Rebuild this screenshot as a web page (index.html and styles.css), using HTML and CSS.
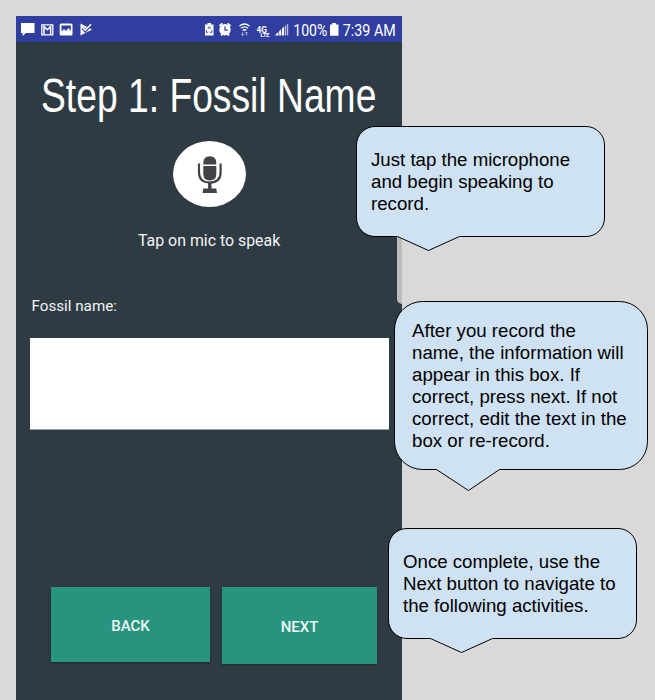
FILE: index.html
```
<!DOCTYPE html>
<html lang="en">
<head>
<meta charset="utf-8">
<title>Step 1: Fossil Name</title>
<link rel="stylesheet" href="styles.css">
</head>
<body>
<main class="phone">
  <header class="status">
    <svg class="notices" width="80" height="26" viewBox="16 16 80 26" fill="#fff">
      <path d="M21 23h13.500v10h-8.500l-3.500 3v-3h-1.500z"/>
      <path d="M41.800 24.800h11v10h-11z" fill="none" stroke="#fff" stroke-width="1.300"/>
      <path d="M44 34.500v-8l3.300 3.300 3.300-3.300v8" fill="none" stroke="#fff" stroke-width="1.500"/>
      <path fill-rule="evenodd" d="M61 23.500h10q1.500 0 1.500 1.500v9q0 1.500-1.500 1.500h-10q-1.300 0-1.300-1.500v-9q0-1.500 1.300-1.500zM61.500 25.500v6l2.500-2.500 2 2 2.500-3 2.300 3v-5.500z"/>
      <path d="M80.500 23.500l11.500 6-11.500 6z"/>
      <path d="M82.500 28l2.800 2.800 5.700-6" fill="none" stroke="#303f9f" stroke-width="3"/>
      <path d="M82.500 27.500l2.800 2.800 5.700-6" fill="none" stroke="#fff" stroke-width="1.500"/>
    </svg>
    <svg class="signals" width="88" height="26" viewBox="203 16 88 26" fill="#fff">
      <path d="M207.500 23h3.500v1.500h2.500v11h-8.500v-11h2.500z"/>
      <path d="M207.700 29l1.500-2.300 1.500 2.300M211.800 30.200l.2 2.100h-2M206.500 30.200l-.2 2.100h2" fill="none" stroke="#303f9f" stroke-width=".9"/>
      <circle cx="225" cy="29.700" r="5.700"/>
      <path d="M219.500 26l3-2.600M230.500 26l-3-2.600M221 35.500l1.600-1.600M229 35.500l-1.600-1.600" stroke="#fff" stroke-width="1.800"/>
      <path d="M225 26.300v3.900h2.800" fill="none" stroke="#303f9f" stroke-width="1.200"/>
      <g fill="none" stroke="#fff" stroke-width="1.300">
        <path d="M239.500 26q5-4 10 0M241 28.300q3.500-2.800 7 0M242.700 30.500q1.800-1.500 3.600 0"/>
        <path d="M242.500 32v3.500M246.500 32v3.500M241 34l1.500 1.500 1.500-1.500M245 33.500l1.500-1.500 1.500 1.500" stroke-width=".8" opacity=".65"/>
      </g>
      <text class="net" x="256.500" y="32.500" textLength="10.500" lengthAdjust="spacingAndGlyphs">4G</text>
      <text class="lte" x="260.500" y="36.800" textLength="9" lengthAdjust="spacingAndGlyphs">LTE</text>
      <path d="M275.500 35.500v-1l3-2.500v3.500zM279.200 35.500v-4.500l2-1.700v6.200zM282 35.500v-7l2-1.700v8.700z"/>
      <path d="M284.700 35.500v-9.300l1.600-1.400v10.700zM287 35.500v-11.300l1.200-1v12.300z" opacity=".65"/>
    </svg>
    <svg class="clock" width="111" height="26" viewBox="291 16 111 26" fill="#fff">
      <text class="time" x="293.300" y="35.500" textLength="34" lengthAdjust="spacingAndGlyphs">100%</text>
      <path d="M332.200 23h3.600v1.500h2.700v11.300h-8.500v-11.300h2.200z"/>
      <text class="time" x="342.800" y="35.500" textLength="53" lengthAdjust="spacingAndGlyphs">7:39 AM</text>
    </svg>
  </header>

  <h1 class="title"><span>Step 1: Fossil Name</span></h1>

  <button class="mic" aria-label="Record">
    <svg width="28" height="40" viewBox="0 0 28 40">
      <path d="M7.300 10.500v-1.500q0-6.700 6.500-6.700t6.500 6.700v1.500zM7.300 12h13v8q0 6.500-6.500 6.500t-6.500-6.500z" fill="#424346"/>
      <path d="M3 9.500v9q0 10 10.800 10t10.800-10v-9" fill="none" stroke="#424346" stroke-width="2.200"/>
      <path d="M12.100 28h3.400v6.500h4.700l.8 4.500h-14.500l.8-4.500h4.800z" fill="#424346"/>
    </svg>
  </button>
  <p class="hint">Tap on mic to speak</p>

  <label class="label" for="fossil">Fossil name:</label>
  <input class="field" id="fossil" type="text">

  <div class="actions">
    <button class="btn back">BACK</button>
    <button class="btn next">NEXT</button>
  </div>
  <div class="scrollbar"></div>
</main>

<aside class="callout tap">
  <svg class="bubble" width="250" height="126" viewBox="356 126 250 126">
    <path d="M375 126.500H586a18.500 18.500 0 0 1 18.500 18.500V218a18.500 18.500 0 0 1-18.500 18.500H459.500L428.500 250.500L397.500 236.500H375a18.500 18.500 0 0 1-18.500-18.500V145a18.500 18.500 0 0 1 18.500-18.500Z"/>
  </svg>
  <p>Just tap the microphone<br>and begin speaking to<br>record.</p>
</aside>
<aside class="callout edit">
  <svg class="bubble" width="255" height="191" viewBox="394 301 255 191">
    <path d="M422.500 301.500H619.500a28 28 0 0 1 28 28V441.500a28 28 0 0 1-28 28H499.500L468.500 490.500L436.500 469.500H422.500a28 28 0 0 1-28-28V329.500a28 28 0 0 1 28-28Z"/>
  </svg>
  <p>After you record the<br>name, the information will<br>appear in this box. If<br>correct, press next. If not<br>correct, edit the text in the<br>box or re-record.</p>
</aside>
<aside class="callout proceed">
  <svg class="bubble" width="250" height="126" viewBox="388 528 250 126">
    <path d="M407 528.500H618a18.500 18.500 0 0 1 18.500 18.500V620a18.500 18.500 0 0 1-18.500 18.500H492.500L461.500 652.500L430.500 638.500H407a18.500 18.500 0 0 1-18.500-18.500V547a18.500 18.500 0 0 1 18.500-18.500Z"/>
  </svg>
  <p>Once complete, use the<br>Next button to navigate to<br>the following activities.</p>
</aside>
</body>
</html>
```
FILE: styles.css
```
* { box-sizing: border-box; }
body {
  margin: 0;
  height: 700px;
  padding: 16px 0 0 16px;
  background: #d9d9d9;
  position: relative;
  overflow: hidden;
}
.phone {
  position: relative;
  display: flex;
  flex-direction: column;
  width: 386px;
  height: 684px;
  background: #2f3b43;
  color: #f2f3f4;
  font-family: Roboto, sans-serif;
}
.status {
  display: flex;
  height: 26px;
  flex: none;
  background: #303f9f;
}
.status svg { display: block; flex: none; overflow: visible; }
.signals { margin-left: auto; }
.time { font: 16px Roboto, sans-serif; }
.net { font: bold 9px Roboto, sans-serif; }
.lte { font: bold 5.5px Roboto, sans-serif; }
.title {
  margin: 25px 0 0 24.5px;
  height: 56px;
  font: 400 48.5px/56px "Liberation Sans", sans-serif;
  color: #fff;
  white-space: nowrap;
}
.title span {
  display: inline-block;
  transform: scaleX(.768);
  transform-origin: 0 0;
}
.mic {
  display: flex;
  align-items: center;
  justify-content: center;
  width: 73px;
  height: 66px;
  margin: 18px 0 0 157px;
  padding: 0;
  border: 0;
  border-radius: 50%;
  background: #fff;
}
.mic svg { display: block; }
.hint {
  margin: 23px 0 0 122px;
  font-size: 15.9px;
  line-height: 22px;
}
.label {
  margin: 44px 0 0 15.500px;
  font-size: 15.2px;
  line-height: 20px;
}
.field {
  width: 359px;
  height: 92px;
  margin: 22px 0 0 13.500px;
  padding: 8px;
  border: 0;
  border-bottom: 1px solid #9a9fa3;
  background: #fff;
}
.actions {
  display: flex;
  align-items: flex-start;
  gap: 12px;
  margin: 157px 0 0 35px;
}
.btn {
  height: 75px;
  padding: 2px 0 0;
  border: 0;
  background: #26947f;
  color: #f0f8f6;
  font: 500 15px Roboto, sans-serif;
  box-shadow: 0 1px 2px rgba(0, 0, 0, .4);
}
.back { width: 159px; }
.next { width: 155px; height: 77px; }
.scrollbar {
  position: absolute;
  right: 0;
  top: 200px;
  width: 5px;
  height: 88px;
  background: #babdc0;
  border-radius: 0 0 0 5px;
}
.callout {
  position: absolute;
  font: 18.667px/22px "Liberation Sans", sans-serif;
  color: #000;
  white-space: nowrap;
}
.callout p { position: relative; margin: 0; }
.bubble {
  position: absolute;
  left: 0;
  top: 0;
  fill: #cfe2f3;
  stroke: #000;
  stroke-width: 1;
}
.tap { left: 356px; top: 126px; padding: 23px 0 0 15px; }
.edit { left: 394px; top: 301px; padding: 19px 0 0 18px; }
.proceed { left: 388px; top: 528px; padding: 23px 0 0 15px; }
```
